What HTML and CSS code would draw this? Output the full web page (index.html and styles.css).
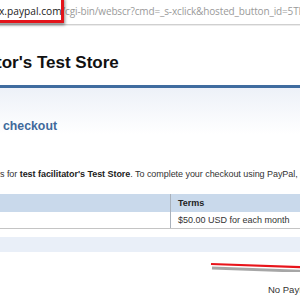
FILE: index.html
```html
<!DOCTYPE html>
<html lang="en">
<head>
    <meta charset="UTF-8">
    <meta name="viewport" content="width=device-width, initial-scale=1.0">
    <title>PayPal Checkout - Test Store</title>
    <link rel="stylesheet" href="styles.css">
</head>
<body>
    <div class="url-bar">
        <p class="url-text"><span class="host">x.paypal.com</span>/cgi-bin/webscr?cmd=_s-xclick&amp;hosted_button_id=5TF</p>
        <!-- red marker drawn round the domain -->
        <div class="mark-box"></div>
    </div>

    <header class="store-header">
        <h1>tor's Test Store</h1>
    </header>

    <main>
        <div class="checkout-band">
            <h2>checkout</h2>
        </div>

        <p class="intro">s for <strong>test facilitator's Test Store</strong>. To complete your checkout using PayPal, please log in.</p>

        <table class="terms">
            <thead>
                <tr>
                    <th class="desc"></th>
                    <th>Terms</th>
                </tr>
            </thead>
            <tbody>
                <tr>
                    <td class="desc"></td>
                    <td>$50.00 USD for each month</td>
                </tr>
            </tbody>
        </table>

        <div class="total-bar"></div>

        <div class="login-area">
            <svg class="mark-line" width="100" height="12" viewBox="0 0 100 12">
                <line x1="2" y1="6" x2="100" y2="9.5" stroke="#000" stroke-opacity="0.35" stroke-width="3" transform="translate(1,2)"/>
                <line x1="2" y1="4" x2="100" y2="7.5" stroke="#e8141b" stroke-width="2.2"/>
            </svg>
            <p class="no-account">No PayPal account?</p>
        </div>
    </main>
</body>
</html>
```

FILE: styles.css
```css
body {
    margin: 0;
    padding: 0;
    width: 300px;
    height: 300px;
    overflow: hidden;
    background-color: #fff;
    font-family: "Liberation Sans", Arial, sans-serif;
    color: #333;
}

/* address bar */
.url-bar {
    position: relative;
    height: 24px;
    border-bottom: 1px solid #d0d0d0;
    box-shadow: 0 1px 0 #ececec;
}

.url-text {
    margin: 0;
    padding-top: 4px;
    font-family: "Open Sans", "DejaVu Sans", sans-serif;
    font-size: 10px;
    line-height: 14px;
    letter-spacing: -0.15px;
    white-space: nowrap;
    overflow: hidden;
    color: #9a9a9a;
    text-indent: -1px;
}

.host {
    font-size: 10.2px;
    letter-spacing: 0;
    color: #222;
}

.mark-box {
    position: absolute;
    left: -6px;
    top: -3px;
    width: 64px;
    height: 20px;
    border: 3px solid #e3141b;
    box-shadow: 1px 2px 3px rgba(0, 0, 0, 0.45);
}

/* store title */
.store-header {
    padding: 28px 0 12px;
    border-bottom: 3px solid #3f6c9f;
}

.store-header h1 {
    margin: 0;
    font-size: 17px;
    line-height: 20px;
    color: #111;
    text-indent: -4px;
}

.checkout-band {
    height: 62px;
    background: linear-gradient(#edf1f8, #fff 75%);
}

.checkout-band h2 {
    margin: 0;
    padding: 30px 0 0 3px;
    font-size: 12.3px;
    line-height: 16px;
    color: #40699b;
}

.intro {
    margin: 18px 0 0;
    font-size: 9px;
    line-height: 12px;
    letter-spacing: -0.05px;
    white-space: nowrap;
    overflow: hidden;
    color: #333;
}

.intro strong {
    color: #222;
}

/* terms table */
.terms {
    margin-top: 14px;
    width: 330px;
    border-collapse: collapse;
    font-size: 9px;
}

.terms th {
    height: 18px;
    padding: 0 0 0 7px;
    text-align: left;
    background-color: #c9d9eb;
    color: #222;
}

.terms td {
    height: 16px;
    padding: 0 0 0 7px;
    border-bottom: 1px solid #c4c4c4;
    color: #333;
}

.terms .desc {
    width: 163px;
    border-right: 1px solid #a9b1bb;
}

.total-bar {
    margin-top: 8px;
    height: 15px;
    background-color: #e9eff8;
}

.login-area {
    position: relative;
    height: 48px;
}

.mark-line {
    position: absolute;
    left: 209px;
    top: 8px;
}

.no-account {
    margin: 0;
    padding: 32px 0 0 268px;
    font-size: 9.5px;
    line-height: 12px;
    white-space: nowrap;
    color: #333;
}
```
